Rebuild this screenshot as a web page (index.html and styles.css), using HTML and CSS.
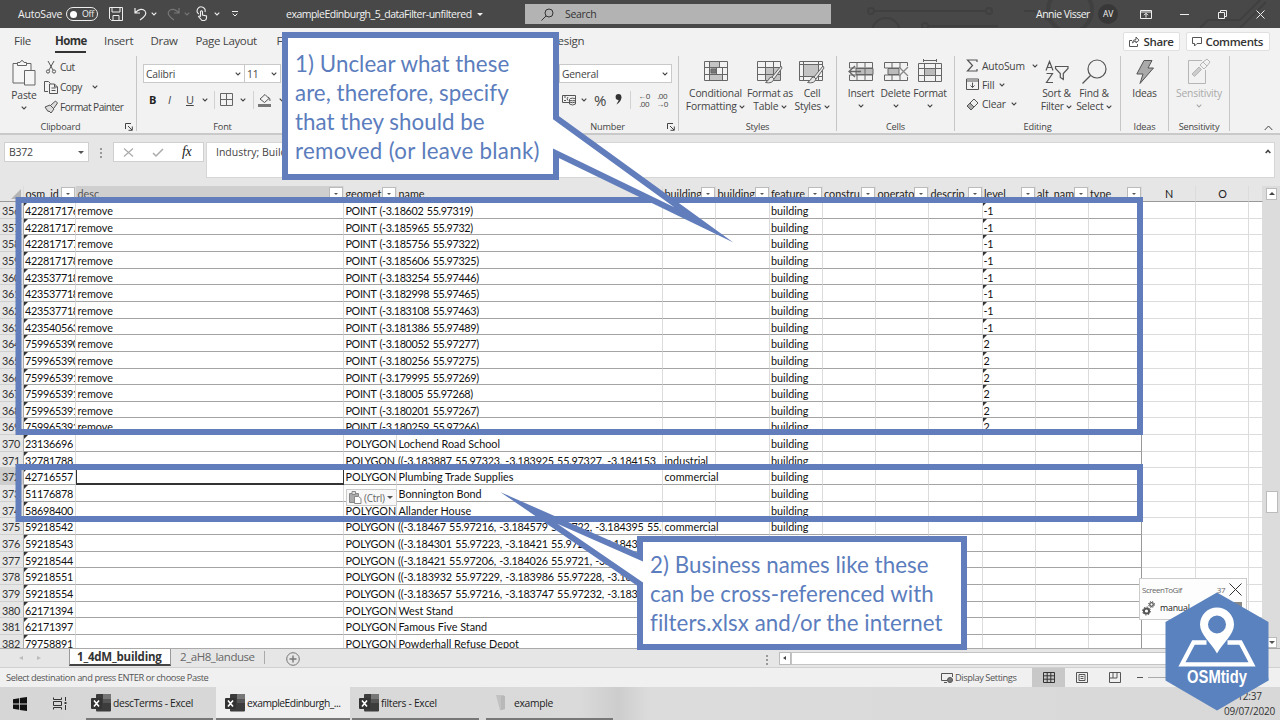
FILE: index.html
```html
<!DOCTYPE html>
<html lang="en">
<head>
<meta charset="utf-8">
<title>exampleEdinburgh_5_dataFilter-unfiltered</title>
<link rel="stylesheet" href="styles.css">
</head>
<body>
<svg class="defs" width="0" height="0">
  <symbol id="chev" viewBox="0 0 6 4"><path d="M.7.7 3 3 5.3.7" fill="none" stroke="currentColor" stroke-width="1.1"/></symbol>
  <symbol id="launch" viewBox="0 0 8 8"><path d="M.5 6V.5H6M3 3l4 4M7.3 3.5v3.8H3.5" fill="none" stroke="currentColor"/></symbol>
  <symbol id="xl" viewBox="0 0 20 18"><rect x="5" width="15" height="17.500" rx="1" fill="#3c3c3c"/><path d="M12 0h7a1 1 0 0 1 1 1v4h-8z" fill="#777"/><path d="M12 5h8v4h-8z" fill="#555"/><rect y="4" width="11" height="11" rx="1" fill="#333"/><path d="M3 6.500 8 12.500M8 6.500 3 12.500" stroke="#fff" stroke-width="1.600"/></symbol>
</svg>
<div class="app">
  <header class="title">
    <svg class="circuit" width="480" height="28" viewBox="0 0 480 28" fill="none" stroke="#404040" stroke-width="2"><circle cx="71" cy="11" r="3"/><path d="M75 11h110M224 11h10l22 14M128 26h70M400 28l8-8h32l20-20M440 28l26-26"/><circle cx="189" cy="11" r="3"/><circle cx="86" cy="32" r="14"/><circle cx="270" cy="10" r="22" stroke-width="4"/><circle cx="125" cy="26" r="3"/></svg>
    <span class="autosave">AutoSave</span>
    <span class="toggle"><i></i>Off</span>
    <svg class="i-save" width="14" height="14" viewBox="0 0 14 14" fill="none" stroke="#eee"><path d="M.5.500h13v13h-11l-2-2zM3 .5v4.500h8V.5M4 13V8.500h6V13"/></svg>
    <svg class="i-undo" width="13" height="14" viewBox="0 0 13 14" fill="none" stroke="#eee" stroke-width="1.200"><path d="M1 1v5h5M1.300 5.700C5 1.500 9 1.500 11 4s.5 5-5 9"/></svg>
    <svg class="dd1" width="6" height="4"><use href="#chev"/></svg>
    <svg class="i-redo" width="13" height="14" viewBox="0 0 13 14" fill="none" stroke="#777" stroke-width="1.200"><path d="M12 1v5H7M11.700 5.700C8 1.500 4 1.500 2 4s-.5 5 5 9"/></svg>
    <svg class="dd1 dim" width="6" height="4"><use href="#chev"/></svg>
    <svg class="i-touch" width="11" height="14" viewBox="0 0 11 14" fill="none" stroke="#eee" stroke-width="1.100"><path d="M1.700 7A4 4 0 1 1 8 5M3.500 9V4.500q1-1.500 2 0V8l4 1v2q0 2-2 2.500H5L1.500 9.500q1-1.200 2.200.5"/></svg>
    <svg class="dd1" width="6" height="4"><use href="#chev"/></svg>
    <svg class="i-more" width="6" height="6" viewBox="0 0 6 6" fill="none" stroke="#eee"><path d="M0 .5h6M.7 2.700 3 5l2.300-2.300"/></svg>
    <span class="file">exampleEdinburgh_5_dataFilter-unfiltered</span><i class="tri white"></i>
    <div class="search"><svg width="13" height="13" viewBox="0 0 13 13" fill="none" stroke="#333"><circle cx="8" cy="5" r="4"/><path d="M5 8 .5 12.500"/></svg><span>Search</span></div>
    <span class="user">Annie Visser</span><span class="av">AV</span>
    <svg class="i-rib" width="12" height="9" viewBox="0 0 12 9" fill="none" stroke="#eee"><path d="M.5.500h11v8H.5zM.5 2h11M6 7.500v-4M4 5.200l2-2 2 2"/></svg>
    <svg class="i-min" width="9" height="9" viewBox="0 0 9 9" stroke="#eee"><path d="M0 4.500h9"/></svg>
    <svg class="i-max" width="9" height="9" viewBox="0 0 9 9" fill="none" stroke="#eee"><path d="M.5 2.500h6v6h-6zM2.500 2V.5h6v6H7"/></svg>
    <svg class="i-close" width="9" height="9" viewBox="0 0 9 9" stroke="#eee"><path d="m.5.500 8 8M8.500.500l-8 8"/></svg>
  </header>

  <nav class="tabs">
    <span class="t-file">File</span><span class="t-home">Home</span><span class="t-ins">Insert</span><span class="t-draw">Draw</span><span class="t-page">Page Layout</span><span class="t-form">Formulas</span><span class="t-des">Design</span>
    <span class="pill share"><svg width="11" height="11" viewBox="0 0 11 11" fill="none" stroke="#555"><path d="M3 4.500H.5v6h8V8M3.500 7Q3.500 3.500 7 3.500V1l3 3.200L7 7V5Q5 5 3.500 7z"/></svg>Share</span>
    <span class="pill comm"><svg width="10" height="10" viewBox="0 0 10 10" fill="none" stroke="#555"><path d="M.5.500h9v6H5L2.500 9V6.500h-2z"/></svg>Comments</span>
  </nav>

  <section class="ribbon">
    <div class="group g-clip">
      <div class="body">
        <div class="big paste"><svg width="24" height="27" viewBox="0 0 24 27" fill="#f6f6f6" stroke="#666"><path d="M1 4.500h18V24H1z"/><path d="M5.500 6.500v-3h2.500q2-4 4 0h2.500v3z"/><path d="M12.500 11.500h10.500V26H12.500z"/></svg><span>Paste</span><svg width="6" height="4"><use href="#chev"/></svg></div>
        <div class="list cliplist">
          <span><svg width="14" height="14" viewBox="0 0 14 14" fill="none" stroke="#555"><path d="m4 1 5 9M10 1l-5 9"/><circle cx="4" cy="11.500" r="1.600"/><circle cx="10" cy="11.500" r="1.600"/></svg>Cut</span>
          <span><svg width="14" height="14" viewBox="0 0 14 14" fill="none" stroke="#555"><path d="M4 11.500H.5v-10h4l2 2M5.500 4h5l3 3v6.500h-8zM7.500 8h4M7.500 10.500h4M10.500 4v3h3"/></svg>Copy<svg class="gap" width="6" height="4"><use href="#chev"/></svg></span>
          <span><svg width="14" height="14" viewBox="0 0 14 14" fill="#ddd" stroke="#555"><path d="m1 7 5-2 4 4-3 4-2-2-1 .5zM7 5l4.500-4 2 2L10 8"/></svg>Format Painter</span>
        </div>
      </div>
      <div class="cap">Clipboard<svg class="lnch" width="8" height="8"><use href="#launch"/></svg></div>
    </div>
    <div class="group g-font">
      <div class="fbody">
        <div class="row"><div class="combo c1">Calibri<svg width="6" height="4"><use href="#chev"/></svg></div><div class="combo c2">11<svg width="6" height="4"><use href="#chev"/></svg></div></div>
        <div class="row fmt"><b>B</b><i>I</i><u>U</u><svg width="6" height="4"><use href="#chev"/></svg><em class="vr"></em>
          <svg width="13" height="13" viewBox="0 0 13 13" fill="none" stroke="#666"><path d="M.5.500h12v12H.5zM6.500.5v12M.5 6.500h12"/></svg><svg class="m7" width="6" height="4"><use href="#chev"/></svg><em class="vr"></em>
          <svg width="14" height="14" viewBox="0 0 14 14" fill="none" stroke="#555"><path d="m2 6 5-4.500 4 4L6.500 9.500zM10 4q2.500 1 2 4"/><path d="M0 12.500h13" stroke="#777" stroke-width="3"/></svg><svg class="m7" width="6" height="4"><use href="#chev"/></svg></div>
      </div>
      <div class="cap">Font</div>
    </div>
    <div class="group g-align"></div>
    <div class="group g-num">
      <div class="nbody">
        <div class="combo c3">General<svg width="6" height="4"><use href="#chev"/></svg></div>
        <div class="row nrow"><svg width="14" height="12" viewBox="0 0 14 12" fill="none" stroke="#555"><path d="M.5 1.500h13v4M.5 1.500v7H7M2 3h2M2 6.500h2M6 3q-2 2 0 3.500"/><ellipse cx="10.500" cy="5.500" rx="3" ry="1.300"/><path d="M7.500 5.500v4.500q3 2 6 0V5.500M7.500 8q3 1.500 6 0"/></svg><svg class="n1" width="6" height="4"><use href="#chev"/></svg><span class="pct">%</span><svg class="n2" width="7" height="11" viewBox="0 0 7 11"><circle cx="3.500" cy="3" r="2.900" fill="#333"/><path d="M6.400 3q0 5-5 7.500Q4 7 4 4z" fill="#333"/></svg><em class="vr"></em>
        <span class="dec">←0<br>.00</span><span class="dec">.00<br>→0</span></div>
      </div>
      <div class="cap">Number<svg class="lnch" width="8" height="8"><use href="#launch"/></svg></div>
    </div>
    <div class="group g-styles">
      <div class="body">
        <div class="big w1"><svg width="24" height="20" viewBox="0 0 24 20" fill="none" stroke="#666"><path d="M5 0h10v7H5zM5 7h7v6H5zM5 13h14v6H5z" fill="#c4c4c4" stroke="none"/><path d="M.5.500h23v19H.5zM5.500.5v19M15.500.5v6M.5 6.500h23M.5 13.500h23M12.500 6.500v7M18.500 6.500v13"/><path d="M7 8h5v4H7z" fill="#777"/></svg><span>Conditional<br>Formatting <svg width="6" height="4"><use href="#chev"/></svg></span></div>
        <div class="big w2"><svg width="26" height="23" viewBox="0 0 26 23" fill="none" stroke="#666"><path d="M8 7h15v12H8z" fill="#c4c4c4" stroke="none"/><path d="M.5.500h23v19H.5zM8.500.5v19M16.500.5v19M.5 6.500h23M.5 13.500h23"/><path d="M24 5 15 16l2 2 8-11zM15 16q-3 0-3.500 3l-3 2.500q7 1.500 8.500-3.500" fill="#e6e6e6"/></svg><span>Format as<br>Table <svg width="6" height="4"><use href="#chev"/></svg></span></div>
        <div class="big w3"><svg width="26" height="23" viewBox="0 0 26 23" fill="none" stroke="#666"><path d="M5 4h15v11H5z" fill="#c4c4c4" stroke="none"/><path d="M.5.500h23v19H.5zM4.500.5v19M19.500.5v19M.5 3.500h23M.5 15.500h23"/><path d="M24 5 15 16l2 2 8-11zM15 16q-3 0-3.500 3l-3 2.500q7 1.500 8.500-3.500" fill="#e6e6e6"/></svg><span>Cell<br>Styles <svg width="6" height="4"><use href="#chev"/></svg></span></div>
      </div>
      <div class="cap">Styles</div>
    </div>
    <div class="group g-cells">
      <div class="body">
        <div class="big w4"><svg width="26" height="22" viewBox="0 0 26 22" fill="none" stroke="#666"><path d="M1.500 7V1.500h23v18h-23V14M9 1.500v5M17 1.500v5M9 14v5.500M17 14v5.500M1.500 7h23M1.500 14h23"/><path d="M8 7.500h17v6H8z" fill="#bbb"/><path d="M17 7.500v6"/><path d="M7 5 1 10.500 7 16M1 10.500h12" stroke-width="1.300"/></svg><span>Insert</span><svg width="6" height="4"><use href="#chev"/></svg></div>
        <div class="big w5"><svg width="26" height="22" viewBox="0 0 26 22" fill="none" stroke="#666"><path d="M1.500 7V1.500h23V5M1.500 14v5.500h23V16M9 1.500V7M9 14v5.500M17 1.500V7M17 14v5.500M1.500 7h15M1.500 14h15"/><path d="M5 7.500h11v6H5z" fill="#bbb"/><path d="m16 6 9 9M25 6l-9 9" stroke="#888" stroke-width="1.300"/></svg><span>Delete</span><svg width="6" height="4"><use href="#chev"/></svg></div>
        <div class="big w6"><svg width="24" height="23" viewBox="0 0 24 23" fill="none" stroke="#666"><path d="M5.500 1.500h13M5.500 0v3M18.500 0v3M.5 4.500h23v18H.5zM6.500 4.500v18M17.500 4.500v18M.5 9.500h23M.5 16.500h23"/><path d="M6.500 9.500h11v7h-11z" fill="#bbb"/></svg><span>Format</span><svg width="6" height="4"><use href="#chev"/></svg></div>
      </div>
      <div class="cap">Cells</div>
    </div>
    <div class="group g-edit">
      <div class="body">
        <div class="list edlist">
          <span><svg width="13" height="13" viewBox="0 0 13 13" fill="none" stroke="#555" stroke-width="1.200"><path d="M11 3V1H1.500l5 5.500-5 5.500H11v-2"/></svg>AutoSum<svg class="gap" width="6" height="4"><use href="#chev"/></svg></span>
          <span><svg width="13" height="13" viewBox="0 0 13 13" fill="none" stroke="#555"><path d="M.5 1h12v10.500H.5zM.5 3h12M6.500 4.500v5M4.500 7.500l2 2 2-2"/></svg>Fill<svg class="near" width="6" height="4"><use href="#chev"/></svg></span>
          <span><svg width="13" height="13" viewBox="0 0 13 13" fill="#eee" stroke="#555"><path d="m1 8 7-7 4 4-7 7z"/><path d="m1 8 3-3 4 4-3 3z" fill="#aaa"/></svg>Clear<svg class="near" width="6" height="4"><use href="#chev"/></svg></span>
        </div>
        <div class="big w7"><svg width="24" height="24" viewBox="0 0 24 24" fill="none" stroke="#555" stroke-width="1.200"><path d="M1 10.500 4.500 1.500 8 10.500M2.200 7.500h4.600M1.500 13.500h6L1.500 22.500h6.500M10.500 6.500h12.500v2l-4.700 5v6l-3-2v-4l-4.800-5z"/></svg><span>Sort &amp;<br>Filter <svg width="6" height="4"><use href="#chev"/></svg></span></div>
        <div class="big w8"><svg width="25" height="25" viewBox="0 0 25 25" fill="none" stroke="#555" stroke-width="1.200"><circle cx="15" cy="10" r="9"/><path d="M8.500 16.500.5 24.500"/></svg><span>Find &amp;<br>Select <svg width="6" height="4"><use href="#chev"/></svg></span></div>
      </div>
      <div class="cap">Editing</div>
    </div>
    <div class="group g-ideas">
      <div class="body"><div class="big w9"><svg width="18" height="24" viewBox="0 0 18 24" fill="#aaa" stroke="#555"><path d="M8 .5h8L12 8h5.500L4 23.500 7 14H.8z"/></svg><span>Ideas</span></div></div>
      <div class="cap">Ideas</div>
    </div>
    <div class="group g-sens">
      <div class="body"><div class="big w10"><svg width="24" height="26" viewBox="0 0 24 26" fill="none" stroke="#b5b5b5"><path d="M15 2.500H1.500v23h17V12"/><path d="m5 16 7-7 2.500 2.500-7 7z" fill="#ccc"/><path d="m13 7 3-3 4 4-3 3zM16 4l4-3 3 3-3 4"/></svg><span>Sensitivity</span><svg width="6" height="4"><use href="#chev"/></svg></div></div>
      <div class="cap">Sensitivity</div>
    </div>
    <div class="collapse"><svg width="9" height="6" viewBox="0 0 9 6" fill="none" stroke="#444"><path d="m.7 5 3.800-4 3.800 4"/></svg></div>
  </section>

  <section class="formula">
    <div class="namebox">B372<i class="tri"></i></div>
    <div class="dots"><i></i><i></i><i></i></div>
    <div class="fx"><svg width="11" height="9" viewBox="0 0 11 9" stroke="#aaa" stroke-width="1.200"><path d="m1 .5 9 8M10 .5l-9 8"/></svg><svg width="12" height="9" viewBox="0 0 12 9" fill="none" stroke="#aaa" stroke-width="1.500"><path d="m1 5 3 3 7-7"/></svg><span>fx</span></div>
    <div class="fbox"><span>Industry; Building</span><svg width="6" height="5" viewBox="0 0 6 5" fill="none" stroke="#444" stroke-width="1.600"><path d="m.7 4 2.300-2.500L5.300 4"/></svg></div>
  </section>

  <section class="sheet">
    <div class="grid" id="grid"></div>
    <div class="vscroll"><span class="sb"><i class="tri up"></i></span><span class="thumb"></span><span class="sb"><i class="tri"></i></span></div>
  </section>

  <section class="sheettabs">
    <span class="arrows"><i></i><i></i></span>
    <span class="st on">1_4dM_building</span><span class="st">2_aH8_landuse</span><span class="sep"></span>
    <svg class="plus" width="14" height="14" viewBox="0 0 14 14" fill="none" stroke="#777"><circle cx="7" cy="7" r="6.300"/><path d="M7 3.500v7M3.500 7h7" stroke-width="1.400"/></svg>
    <span class="dots d2"><i></i><i></i><i></i></span>
    <span class="hbtn"><i></i></span><span class="htrack"></span>
  </section>

  <footer class="status">
    <span class="msg">Select destination and press ENTER or choose Paste</span>
    <svg class="dsi" width="13" height="12" viewBox="0 0 13 12" fill="none" stroke="#555"><path d="M6 8.500H.5v-7h11V5M3 10.500h3"/><circle cx="9" cy="8" r="2.500" fill="#777"/></svg>
    <span class="ds">Display Settings</span>
    <span class="view sel"><svg width="12" height="11" viewBox="0 0 12 11" fill="none" stroke="#333"><path d="M.5.500h11v10H.5zM4.200.5v10M7.800.5v10M.5 3.800h11M.5 7.200h11"/></svg></span>
    <span class="view"><svg width="12" height="11" viewBox="0 0 12 11" fill="none" stroke="#555"><path d="M.5.500h11v10H.5zM3 2.500h6v6H3zM4.500 4.500h3M4.500 6.500h3"/></svg></span>
    <span class="view"><svg width="12" height="11" viewBox="0 0 12 11" fill="none" stroke="#555"><path d="M.5.500h11v10H.5zM4 .5V6h4V.5M.5 6H4"/></svg></span>
    <i class="zm"></i><i class="zl"></i><span class="zp">%</span>
  </footer>

  <footer class="taskbar">
    <svg class="win" width="14" height="14" viewBox="0 0 14 14" fill="#111"><path d="M0 2.200 6 1.200V6.600H0zM6.800 1 14 0v6.600H6.800zM0 7.400h6v5.400l-6-1zM6.800 7.400H14V14l-7.200-1z"/></svg>
    <svg class="tv" width="14" height="13" viewBox="0 0 14 13" fill="none" stroke="#333"><path d="M.5.500v2h8v-2M.5 4.500h8v4h-8zM.5 12.500v-2h8v2M12.500 0v4M12.500 8v5"/><path d="M11.500 6h2" stroke-width="2"/></svg>
    <span class="task k1"><svg width="20" height="18"><use href="#xl"/></svg>descTerms - Excel</span>
    <span class="task k2"><svg width="20" height="18"><use href="#xl"/></svg>exampleEdinburgh_...</span>
    <span class="task k3"><svg width="20" height="18"><use href="#xl"/></svg>filters - Excel</span>
    <span class="task k4"><svg width="20" height="18" viewBox="0 0 20 18"><path d="M3 1h8l1 14-5 1.500z" fill="#c2c2c2"/><path d="M8 2h4v13l-4 1z" fill="#b8b8b8"/></svg>example</span>
    <span class="clock">12:37<br>09/07/2020</span>
  </footer>

  <div class="ctrl"><svg width="13" height="13" viewBox="0 0 13 13" fill="#ddd" stroke="#888"><path d="M.5 2.500h9v9h-9z" fill="#aaa"/><path d="M3 .5h3.500v3H3z"/><path d="M5.500 5.500h4l2.500 2v5H5.500z" fill="#fff"/></svg>(Ctrl)<i class="tri"></i></div>
  <div class="gif">
    <div class="g1"><span>ScreenToGif</span><span class="n">37</span><svg width="13" height="13" viewBox="0 0 13 13" stroke="#333"><path d="m.5.500 12 12M12.500.5l-12 12"/></svg></div>
    <div class="g2"><svg width="13" height="15" viewBox="0 0 13 15" fill="none" stroke="#555"><circle cx="4.500" cy="10" r="2.600" stroke-width="2"/><circle cx="4.500" cy="10" r="4" stroke-dasharray="1.500 1.600"/><circle cx="9.500" cy="3.500" r="1.800" stroke-width="1.300"/><circle cx="9.500" cy="3.500" r="3" stroke-dasharray="1.200 1.200"/></svg>manual<i></i></div>
  </div>
  <svg class="marks" width="1280" height="720" viewBox="0 0 1280 720" stroke="#617dbb" stroke-width="6" stroke-miterlimit="30">
    <rect x="18.500" y="200" width="1121.500" height="232" fill="none"/>
    <rect x="18.500" y="467" width="1121.500" height="52" fill="none"/>
    <path d="M285 35H556V117.800L704 225 556 153.300V177H285z" fill="#fff"/>
    <path d="M640 539H964V647H640V584L529 508 640 557z" fill="#fff"/>
    <path d="M1217 592.500 1268.500 622v58.500l-51.500 30-51.500-30V622z" fill="#5a82be" stroke="none"/>
    <path d="M1206.500 642.500H1193.500L1182 664.300H1252L1240.500 642.500H1227.500" fill="none" stroke="#fff" stroke-width="4.300"/>
    <path d="M1217 607.500a17 17 0 0 0-17 17c0 10 11 18 17 29 6-11 17-19 17-29a17 17 0 0 0-17-17zm0 8a9 9 0 1 1 0 18 9 9 0 0 1 0-18z" fill="#fff" stroke="none" fill-rule="evenodd"/>
  </svg>
  <div class="note n-one">1) Unclear what these<br>are, therefore, specify<br>that they should be<br><span class="loose">removed (or leave blank)</span></div>
  <div class="note n-two">2) Business names like these<br>can be cross-referenced with<br>filters.xlsx and/or the internet</div>
  <div class="brand">OSMtidy</div>
</div>
<script src="script.js"></script>
</body>
</html>
```
FILE: styles.css
```css
* { box-sizing: border-box; }
body { margin: 0; font-family: "Open Sans", "Noto Sans", sans-serif; font-size: 10.5px; letter-spacing: -0.3px; color: #444; }
.defs { position: absolute; }
.app { position: relative; width: 1280px; height: 720px; overflow: hidden; display: flex; flex-direction: column; background: #e6e6e6; }
svg { flex: none; color: #444; overflow: visible; }
span { white-space: nowrap; }
.tri { flex: none; width: 0; height: 0; border: 3px solid transparent; border-top: 3px solid #555; border-bottom: 0; }
.tri.white { border-top-color: #eee; }
.tri.up { border-top: 0; border-bottom: 3px solid #444; }

/* title bar */
.title { position: relative; height: 28px; flex: none; background: #484848; display: flex; align-items: center; color: #f2f2f2; padding-left: 18px; }
.title svg { color: #eee; }
.title svg.dim { color: #777; }
.circuit { position: absolute; left: 800px; top: 0; overflow: hidden; }
.title > :not(.circuit) { position: relative; }
.autosave { width: 48px; letter-spacing: -0.2px; }
.toggle { width: 32px; height: 14px; border: 1px solid #eee; border-radius: 7px; display: flex; align-items: center; gap: 5px; padding-left: 3px; font-size: 8.8px; }
.toggle i { width: 7px; height: 7px; border-radius: 50%; background: #fff; }
.i-save { margin-left: 11px; }
.i-undo { margin-left: 11px; }
.dd1 { margin-left: 4px; }
.i-redo { margin-left: 10px; }
.i-touch { margin-left: 7px; }
.i-touch + .dd1 { margin-left: 6px; }
.i-more { margin-left: 12px; }
.file { margin-left: 48px; width: 191px; letter-spacing: -0.5px; }
.search { margin-left: 42px; width: 306px; height: 20px; background: #b3b3b3; color: #333; display: flex; align-items: center; padding-left: 16px; gap: 11px; }
.user { margin-left: 205px; width: 62px; letter-spacing: -0.5px; }
.av { width: 20px; height: 20px; border-radius: 50%; background: #383838; font-size: 8.5px; line-height: 20px; text-align: center; }
.i-rib { margin-left: 22px; }
.i-min { margin-left: 28px; }
.i-max { margin-left: 29px; }
.i-close { margin-left: 29px; }

/* ribbon tabs */
.tabs { height: 28px; flex: none; background: #f2f2f2; display: flex; align-items: flex-start; font-size: 11.5px; padding-left: 14px; }
.tabs > span { height: 27px; line-height: 26px; flex: none; }
.t-file { width: 41px; }
.tabs .t-home { width: 31px; margin-right: 18px; font-weight: 700; color: #333; height: 25px; border-bottom: 2px solid #333; letter-spacing: -0.55px; }
.t-ins { width: 46.5px; }
.t-draw { width: 45px; }
.t-page { width: 81px; letter-spacing: -0.35px; }
.t-form { width: 273px; }
.t-des { width: 573px; }
.tabs .pill { height: 19px; margin-top: 4px; line-height: 17px; background: #fff; border: 1px solid #e0e0e0; border-radius: 2px; display: flex; align-items: center; gap: 4px; padding-left: 5px; font-weight: 600; color: #333; letter-spacing: -0.35px; }
.tabs .share { width: 57px; margin-right: 6px; }
.tabs .comm { width: 84px; }

/* ribbon */
.ribbon { height: 79px; flex: none; background: #f2f2f2; border-bottom: 2px solid #c9c9c9; display: flex; }
.group { position: relative; flex: none; display: flex; flex-direction: column; justify-content: space-between; height: 75px; border-right: 1px solid #c6c6c6; }
.g-clip { width: 137px; } .g-font { width: 172px; } .g-align { width: 228px; } .g-num { width: 142px; }
.g-styles { width: 158px; } .g-cells { width: 118px; } .g-edit { width: 166px; } .g-ideas { width: 48px; } .g-sens { width: 61px; }
.cap { font-size: 9.2px; height: 14px; line-height: 14px; text-align: center; position: relative; padding-right: 0; margin-bottom: -3px; letter-spacing: -0.2px; }
.g-clip .cap { padding-right: 15px; }
.lnch { position: absolute; right: 3px; top: 3px; }
.body { display: flex; }
.big { display: flex; flex-direction: column; align-items: center; text-align: center; line-height: 13.2px; flex: none; letter-spacing: -0.2px; font-size: 10.3px; padding-top: 4px; }
.big > svg:first-child { margin-bottom: 3px; }
.big span svg { vertical-align: middle; }
.big > svg:last-child { margin-top: 4px; }
.paste { width: 46px; padding-left: 2px; padding-top: 3px; }
.list { display: flex; flex-direction: column; }
.list span { display: flex; align-items: center; gap: 2px; height: 20px; }
.cliplist { padding-top: 1px; font-size: 10.2px; letter-spacing: -0.55px; margin-left: -2px; }
.list .gap { margin-left: 8px; }
.list .near { margin-left: 2px; }
.fbody { padding: 8px 0 0 6px; }
.row { display: flex; align-items: center; }
.combo { height: 19px; background: #fff; border: 1px solid #c9c9c9; display: flex; align-items: center; justify-content: space-between; padding: 0 3px 0 2px; font-size: 10.3px; letter-spacing: -0.2px; }
.c1 { width: 102px; } .c2 { width: 36px; border-left: 0; } .c3 { width: 113px; }
.fmt { padding: 7px 0 0 6px; height: 26px; font-size: 11px; }
.fmt b { width: 19px; color: #222; } .fmt > i { width: 18px; font-size: 11px; } .fmt u { width: 16px; }
.vr { width: 1px; height: 18px; background: #d2d2d2; margin: 0 5px 0 6px; flex: none; }
.m7 { margin-left: 7px; }
.g-font .vr ~ .vr { margin: 0 4px 0 7px; }
.nbody { padding: 8px 0 0 22px; }
.nrow { height: 33px; padding-left: 3px; }
.n1 { margin-left: 5px; }
.pct { font-size: 15px; margin-left: 7px; }
.n2 { margin-left: 9px; }
.nrow .vr { margin: 0 4px 0 8px; }
.dec { font-size: 8px; line-height: 7.500px; width: 18px; text-align: center; letter-spacing: -0.5px; }
.w1, .w2, .w3 { padding-top: 5px; }
.w1 { width: 73px; } .w2 { width: 36px; } .w3 { width: 48px; }
.w1 > svg:first-child { margin-bottom: 6px; }
.w4 { width: 34px; margin-left: 7px; } .w5 { width: 35px; } .w6 { width: 34px; }
.w4, .w5 { padding-top: 5px; } .w4 > svg:first-child, .w5 > svg:first-child { margin-bottom: 4px; }
.w6 { padding-top: 3px; } .w6 > svg:first-child { margin-bottom: 5px; }
.edlist { width: 81px; padding-left: 11px; font-size: 10.3px; letter-spacing: -0.2px; margin-right: 1px; }
.edlist span { height: 19.300px; gap: 3px; }
.edlist .gap { margin-left: 4px; }
.w7 { width: 39px; } .w8 { width: 36px; padding-top: 3px; }
.w9 { width: 47px; } .w10 { width: 60px; color: #aaa; padding-top: 2px; } .w10 svg { color: #aaa; }
.collapse { flex: 1; display: flex; align-items: flex-end; justify-content: flex-end; padding: 0 7px 2px 0; }

/* formula bar */
.formula { height: 51px; flex: none; display: flex; align-items: flex-start; padding-top: 7px; }
.namebox { margin-left: 4px; width: 85px; height: 20px; background: #fff; border: 1px solid #d0d0d0; display: flex; align-items: center; justify-content: space-between; padding: 0 4px; }
.dots { display: flex; flex-direction: column; gap: 2px; margin: 6px 11px 0; }
.dots i { width: 2px; height: 2px; background: #999; }
.fx { width: 91px; height: 20px; background: #fff; border: 1px solid #d0d0d0; display: flex; align-items: center; gap: 18px; padding-left: 9px; }
.fx span { font: italic 14px "Liberation Serif", serif; color: #222; }
.fbox { margin-left: 2px; width: 1069px; height: 36px; background: #fff; border: 1px solid #d6d6d6; display: flex; justify-content: space-between; padding: 2px 3px 0 9px; font-size: 10.5px; letter-spacing: 0; }
.fbox svg { margin-top: 4px; }

/* sheet */
.sheet { height: 463px; flex: none; display: flex; overflow: hidden; border-bottom: 1px solid #aaa; }
.grid { width: 1263px; flex: none; font-family: Lato, "Open Sans", sans-serif; font-size: 10.8px; color: #111; letter-spacing: 0; }
.line { display: grid; grid-template-columns: 24px 52px 268px 53px 266px 53px 53.5px 53px 53.5px 53px 53.5px 53px 53px 53.5px 53.5px 53.5px 14px; height: 16.670px; }
.line.head { height: 15.950px; color: #222; }
.cell { position: relative; min-width: 0; background: #fff; border-right: 1px solid #dcdcdc; border-bottom: 1px solid #a4a4a4; line-height: 17px; padding-left: 1.500px; white-space: nowrap; overflow: hidden; }
.cell.num { background: #e6e6e6; border-bottom-color: #cfcfcf; border-right-color: #aaa; padding-left: 2px; color: #333; letter-spacing: -0.2px; }
.cell.num.cur { background: #cecece; }
.cell.out { border-bottom-color: #dcdcdc; }
.cell.edge { border-right-color: #999; }
.cell.mark { letter-spacing: -0.28px; padding-left: 1px; }
.cell.pt { letter-spacing: -0.36px; word-spacing: 1px; }
.cell.poly { letter-spacing: -0.22px; word-spacing: 0.8px; }
.cell.mark::before { content: ""; position: absolute; left: 0; top: 0; border: 2.500px solid #333; border-right-color: transparent; border-bottom-color: transparent; }
.cell.active { border: 1px solid #333; border-bottom-width: 2px; border-top: 0; }
.head .cell { background: #e6e6e6; border-bottom-color: #999; padding-top: 1px; line-height: 14px; }
.head .cell.hot { background: #cfcfcf; color: #555; }
.head .cell.ctr { text-align: center; }
.cell.corner::before { content: ""; position: absolute; right: 2px; bottom: 2px; border: 5px solid #b4b4b4; border-top-color: transparent; border-left-color: transparent; }
.btn { position: absolute; right: 0; top: 1px; width: 14px; height: 14px; background: #fff; border: 1px solid #bbb; display: flex; align-items: center; justify-content: center; }
.btn .tri { border-width: 2.500px; border-bottom-width: 0; }
.vscroll { width: 17px; background: #dcdcdc; display: flex; flex-direction: column; align-items: center; padding: 2px 1px 0 1px; }
.sb { width: 11px; height: 12px; background: #fff; border: 1px solid #bbb; display: flex; align-items: center; justify-content: center; }
.thumb { width: 12px; height: 22px; background: #fff; border: 1px solid #bbb; margin: 291px 0 124px; flex: none; }

/* sheet tabs */
.sheettabs { height: 19px; flex: none; display: flex; align-items: flex-start; font-size: 11.5px; color: #666; border-bottom: 1px solid #d0d0d0; }
.arrows { width: 69px; display: flex; gap: 14px; padding: 7px 0 0 19px; }
.arrows i { border: 2.500px solid transparent; border-right: 4px solid #bbb; border-left: 0; }
.arrows i + i { border-right: 0; border-left: 4px solid #bbb; }
.st { width: 93px; height: 17px; line-height: 15px; padding-left: 9px; letter-spacing: -0.45px; }
.st.on { width: 102px; padding-left: 7px; background: #fff; font-weight: 700; color: #333; border: 1px solid #999; border-top: 0; border-bottom: 2px solid #444; letter-spacing: -0.2px; }
.sep { width: 1px; height: 13px; background: #aaa; margin-top: 2px; }
.plus { margin: 3px 0 0 21px; }
.d2 { margin: 6px 11px 0 466px; }
.hbtn { width: 12px; height: 13px; background: #fff; border: 1px solid #bbb; margin-top: 3px; padding: 3px; }
.hbtn i { display: block; width: 0; border: 2.500px solid transparent; border-right: 3px solid #444; border-left: 0; }
.htrack { width: 470px; height: 13px; margin-top: 3px; background: #fff; border: 1px solid #c4c4c4; }

/* status bar */
.status { height: 19px; flex: none; background: #f0f0f0; display: flex; align-items: center; font-size: 9.3px; color: #555; padding-left: 6px; letter-spacing: -0.43px; }
.msg { width: 935px; }
.ds { margin-left: 1px; width: 77px; }
.view { width: 33px; height: 19px; display: flex; align-items: center; justify-content: center; }
.view.sel { background: #c8c8c8; }
.zm { width: 6px; height: 1px; background: #555; margin-left: 6px; }
.zl { width: 80px; height: 1px; background: #aaa; margin-left: 5px; }
.zp { margin-left: 33px; }

/* taskbar */
.taskbar { height: 33px; flex: none; background: linear-gradient(90deg, #d6d6d6 0, #dadada 580px, #cdcdcd 618px, #dcdcdc 650px, #d8d8d8); display: flex; align-items: center; font-size: 10.3px; color: #222; }
.win { margin-left: 13px; }
.tv { margin-left: 26px; margin-right: 19px; }
.task { height: 33px; display: flex; align-items: center; gap: 2px; border-bottom: 2px solid #777; padding-left: 5px; width: 127px; }
.k2 { margin-left: 3px; width: 134px; background: #efefef; padding-left: 9px; letter-spacing: -0.5px; }
.k3 { margin-left: 2px; padding-left: 7px; }
.k4 { margin-left: 7px; padding-left: 7px; gap: 1px; }
.clock { margin-left: auto; padding-right: 5px; text-align: center; line-height: 15px; color: #333; letter-spacing: -0.2px; font-size: 10px; }

/* overlays */
.ctrl { position: absolute; left: 346px; top: 489px; width: 51px; height: 17px; background: #f8f8f8; border: 1px solid #ccc; display: flex; align-items: center; gap: 2px; padding-left: 2px; font-size: 10px; letter-spacing: -0.3px; color: #666; }
.gif { position: absolute; left: 1139px; top: 578px; width: 108px; height: 42px; background: #fdfdfd; border: 1px solid #ccc; font-size: 8px; padding: 3px 4px 0 2px; letter-spacing: -0.5px; }
.g1, .g2 { display: flex; align-items: center; height: 15px; color: #666; }
.g1 .n { margin-left: auto; margin-right: 4px; }
.g2 { height: 22px; color: #222; gap: 5px; font-size: 8.8px; letter-spacing: -0.2px; }
.g2 i { margin-left: auto; width: 14px; height: 12px; background: #888; }
.marks { position: absolute; left: 0; top: 0; }
.note { position: absolute; font: 22.300px/29px Lato, "Open Sans", sans-serif; color: #5b7dbd; white-space: nowrap; letter-spacing: 0.06px; }
.note .loose { letter-spacing: 0.3px; }
.n-one { left: 295px; top: 49px; }
.n-two { left: 650px; top: 550px; }
.brand { position: absolute; left: 1166px; top: 666px; width: 102px; text-align: center; color: #fff; font: bold 18px/22px "Liberation Sans Narrow", "Liberation Sans", sans-serif; letter-spacing: 0; transform: scaleX(.82); }
```
FILE: script.js
```js
const headers = ["", "osm_id", "desc", "geomet", "name", "building", "building", "feature", "constru", "operato", "descrip", "level", "alt_nam", "type", "N", "O", ""];

const points = [
  ["422817176", "-3.18602 55.97319", "-1"], ["422817177", "-3.185965 55.9732", "-1"],
  ["422817177", "-3.185756 55.97322", "-1"], ["422817178", "-3.185606 55.97325", "-1"],
  ["423537718", "-3.183254 55.97446", "-1"], ["423537718", "-3.182998 55.97465", "-1"],
  ["423537718", "-3.183108 55.97463", "-1"], ["423540563", "-3.181386 55.97489", "-1"],
  ["759965390", "-3.180052 55.97277", "2"], ["759965390", "-3.180256 55.97275", "2"],
  ["759965391", "-3.179995 55.97269", "2"], ["759965391", "-3.18005 55.97268", "2"],
  ["759965391", "-3.180201 55.97267", "2"], ["759965391", "-3.180259 55.97266", "2"]
];
const polygons = [
  ["23136696", "Lochend Road School", ""],
  ["32781788", "((-3.183887 55.97323, -3.183925 55.97327, -3.184153", "industrial"],
  ["42716557", "Plumbing Trade Supplies", "commercial"],
  ["51176878", "Bonnington Bond", ""],
  ["58698400", "Allander House", ""],
  ["59218542", "((-3.18467 55.97216, -3.184579 55.9722, -3.184395 55.97", "commercial"],
  ["59218543", "((-3.184301 55.97223, -3.18421 55.97216, -3.1843", ""],
  ["59218544", "((-3.18421 55.97206, -3.184026 55.9721, -3.1841", ""],
  ["59218551", "((-3.183932 55.97229, -3.183986 55.97228, -3.18", ""],
  ["59218554", "((-3.183657 55.97216, -3.183747 55.97232, -3.183", ""],
  ["62171394", "West Stand", ""],
  ["62171397", "Famous Five Stand", ""],
  ["79758891", "Powderhall Refuse Depot", ""]
];

const grid = document.getElementById("grid");

function cell(line, text, classes, span) {
  const el = document.createElement("div");
  el.className = "cell " + (classes || "");
  el.textContent = text || "";
  if (span) el.style.gridColumn = "span " + span;
  line.appendChild(el);
  return el;
}
function newLine(classes) {
  const line = document.createElement("div");
  line.className = "line " + (classes || "");
  grid.appendChild(line);
  return line;
}
function tail(line, feature, level) {
  cell(line, feature);
  cell(line); cell(line); cell(line);
  cell(line, level, level ? "mark" : "");
  cell(line); cell(line, "", "edge");
  cell(line, "", "out"); cell(line, "", "out"); cell(line, "", "out");
}

const head = newLine("head");
headers.forEach((name, i) => {
  const el = cell(head, name, i === 0 ? "corner" : i === 2 ? "hot" : i > 13 ? "ctr" : "");
  if (i > 0 && i < 14 && i !== 4) {
    const btn = document.createElement("span");
    btn.className = "btn";
    btn.innerHTML = '<i class="tri"></i>';
    el.appendChild(btn);
  }
});

points.forEach(([id, at, level], i) => {
  const line = newLine();
  cell(line, 356 + i, "num");
  cell(line, id, "mark");
  cell(line, "remove");
  cell(line, "POINT (" + at + ")", "pt", 2);
  cell(line); cell(line);
  tail(line, "building", level);
});

polygons.forEach(([id, name, type], i) => {
  const line = newLine();
  const current = i === 2;
  cell(line, 370 + i, current ? "num cur" : "num");
  cell(line, id, "mark");
  cell(line, "", current ? "active" : "");
  if (name.startsWith("((")) {
    cell(line, "POLYGON " + name, "poly", 2);
  } else {
    cell(line, "POLYGON");
    cell(line, name);
  }
  if (type === "commercial") {
    cell(line, type, "", 2);
  } else {
    cell(line, type); cell(line);
  }
  tail(line, i < 6 ? "building" : "", "");
});
```
